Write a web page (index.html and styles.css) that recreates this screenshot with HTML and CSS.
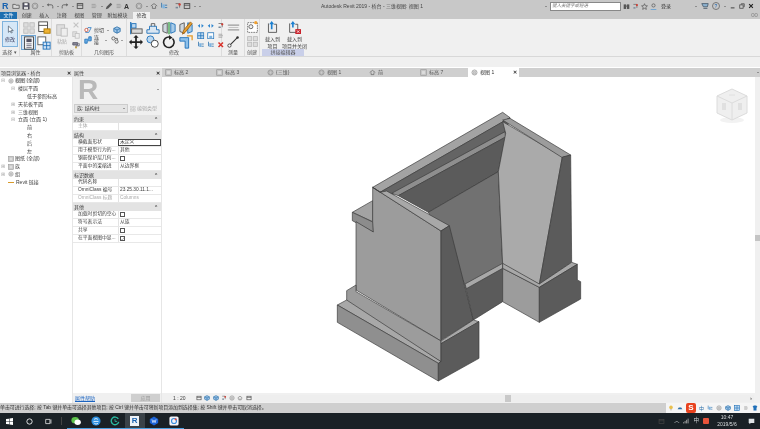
FILE: index.html
```html
<!DOCTYPE html>
<html lang="zh">
<head>
<meta charset="utf-8">
<title>Autodesk Revit 2019</title>
<link rel="stylesheet" href="styles.css">
</head>
<body>
<svg class="defs" width="0" height="0">
  <symbol id="faded" viewBox="0 0 16 16"><rect x="2" y="2" width="5" height="5" fill="#ddd" stroke="#bbb"/><rect x="9" y="2" width="5" height="5" fill="#ddd" stroke="#bbb"/><rect x="2" y="9" width="5" height="5" fill="#ddd" stroke="#bbb"/><rect x="9" y="9" width="5" height="5" fill="#ddd" stroke="#bbb"/></symbol>
  <symbol id="props" viewBox="0 0 16 16"><rect x="2" y="1" width="10" height="11" fill="#fff" stroke="#444"/><path d="M2 5h10" stroke="#444"/><rect x="8" y="9" width="7" height="5" fill="#eeb233" stroke="#a70"/></symbol>
  <symbol id="sheet" viewBox="0 0 16 16"><rect x="3" y="1" width="10" height="14" fill="#fff" stroke="#333"/><path d="M5 3h6v4H5z" fill="#556"/><path d="M5 9h6M5 11h6M5 13h6" stroke="#667"/></symbol>
  <symbol id="table" viewBox="0 0 16 16"><rect x="1" y="1" width="9" height="9" fill="#fff" stroke="#555"/><rect x="7" y="7" width="8" height="8" fill="#cfe2f5" stroke="#1b6fb8"/><path d="M11 7v8M7 11h8" stroke="#1b6fb8"/></symbol>
  <symbol id="paste" viewBox="0 0 16 16"><rect x="2" y="2" width="9" height="12" fill="#dedede" stroke="#bbb"/><rect x="7" y="6" width="7" height="9" fill="#eee" stroke="#bbb"/></symbol>
  <symbol id="ghost" viewBox="0 0 10 10"><path d="M2 2l6 6M8 2l-6 6" stroke="#c4c4c4" stroke-width="1.4"/></symbol>
  <symbol id="copy" viewBox="0 0 10 10"><rect x="1" y="1" width="5" height="6" fill="#e2e2e2" stroke="#c0c0c0"/><rect x="4" y="3" width="5" height="6" fill="#eee" stroke="#c0c0c0"/></symbol>
  <symbol id="brush" viewBox="0 0 10 10"><path d="M1 2h6v3H1z" fill="#889" stroke="#556"/><path d="M8 3h1v3H5v3" fill="none" stroke="#556"/><path d="M4 7h2v2H4z" fill="#c9a030"/></symbol>
  <symbol id="cut" viewBox="0 0 10 10"><path d="M2 8l3-6h4L6 8z" fill="#eee" stroke="#2b7cc4"/><circle cx="3" cy="5" r="2" fill="#fff" stroke="#d24a2c"/></symbol>
  <symbol id="join" viewBox="0 0 10 10"><path d="M1 4h5V1h3v5H4v3H1z" fill="#6eaee6" stroke="#1b6fb8"/></symbol>
  <symbol id="cube" viewBox="0 0 10 10"><path d="M5 1l4 2v4L5 9 1 7V3z" fill="#9cc4e8" stroke="#2a6ea8"/><path d="M1 3l4 2 4-2M5 5v4" stroke="#2a6ea8" fill="none"/></symbol>
  <symbol id="loop" viewBox="0 0 10 10"><circle cx="3" cy="3" r="2" fill="#eee" stroke="#555"/><circle cx="7" cy="7" r="2" fill="#eee" stroke="#555"/><path d="M5 3h3v2" stroke="#555" fill="none"/></symbol>
  <symbol id="undo" viewBox="0 0 10 10"><path d="M8.500 8V5.500a2 2 0 0 0-2-2H2" fill="none" stroke="#666" stroke-width="1.200"/><path d="M3.500 1.500L1 3.500l2.500 2z" fill="#666"/></symbol>
  <symbol id="redo" viewBox="0 0 10 10"><path d="M1.500 8V5.500a2 2 0 0 1 2-2H8" fill="none" stroke="#666" stroke-width="1.200"/><path d="M6.500 1.500L9 3.500l-2.500 2z" fill="#666"/></symbol>
  <symbol id="save" viewBox="0 0 10 10"><path d="M1 1h7l1 1v7H1z" fill="#556" stroke="#333" stroke-width=".6"/><rect x="3" y="1.500" width="4" height="2.500" fill="#fff"/><rect x="2.500" y="6" width="5" height="3" fill="#ddd"/></symbol>
  <symbol id="open" viewBox="0 0 10 10"><path d="M1 3h3l1 1h4v4H1z" fill="#d9d9d9" stroke="#555"/></symbol>
  <symbol id="pencil" viewBox="0 0 10 10"><path d="M1 9l1-3 5-5 2 2-5 5z" fill="#555"/></symbol>
  <symbol id="binoc" viewBox="0 0 10 10"><rect x="1" y="2" width="3.400" height="6.500" fill="#555"/><rect x="5.600" y="2" width="3.400" height="6.500" fill="#555"/><rect x="4" y="3.500" width="2" height="2" fill="#777"/></symbol>
  <symbol id="star" viewBox="0 0 10 10"><path d="M5 1l1.200 2.800 3 .3-2.300 2 .7 3L5 7.600 2.400 9.100l.7-3-2.300-2 3-.3z" fill="none" stroke="#555"/></symbol>
  <symbol id="user" viewBox="0 0 10 10"><circle cx="5" cy="3.500" r="2.300" fill="none" stroke="#555"/><path d="M1 9.500h8" stroke="#3a8fd8"/></symbol>
  <symbol id="cart" viewBox="0 0 10 10"><path d="M1 2h8L8 6H3z" fill="#8cb2d0" stroke="#456"/><path d="M3 8h5" stroke="#456"/></symbol>
  <symbol id="minw" viewBox="0 0 8 8"><path d="M1 6.500h5" stroke="#333" stroke-width="1.200"/></symbol>
  <symbol id="restw" viewBox="0 0 8 8"><path d="M3 2V1h4v4H6" fill="none" stroke="#444"/><rect x="1" y="2.500" width="4.500" height="4.500" fill="none" stroke="#444"/></symbol>
  <symbol id="closew" viewBox="0 0 8 8"><path d="M1.500 1.500l5 5M6.500 1.500l-5 5" stroke="#222" stroke-width="1.500"/></symbol>
  <symbol id="align" viewBox="0 0 16 16"><path d="M2 1v14" stroke="#1b6fb8" stroke-width="1.4"/><rect x="3" y="3" width="5" height="5" fill="#bcd8f0" stroke="#1b6fb8"/><rect x="3" y="9" width="12" height="5" fill="#d9d9d9" stroke="#555"/></symbol>
  <symbol id="offset" viewBox="0 0 16 16"><path d="M1 14h14v-4h-3V6H4v4H1z" fill="#d9e6f2" stroke="#1b6fb8"/><path d="M6 6V3h4v3" fill="none" stroke="#555"/></symbol>
  <symbol id="mirror" viewBox="0 0 16 16"><path d="M8 1v14" stroke="#3aa04a" stroke-width="1.5"/><path d="M1 4l5 -2v12l-5-2z" fill="#cfd8e0" stroke="#555"/><path d="M15 4l-5-2v12l5-2z" fill="#a7cbe8" stroke="#1b6fb8"/></symbol>
  <symbol id="mirror2" viewBox="0 0 16 16"><path d="M1 4l5-2v12l-5-2z" fill="#cfd8e0" stroke="#555"/><path d="M15 4l-5-2v12l5-2z" fill="#a7cbe8" stroke="#1b6fb8"/><path d="M13 1L5 11l-1 4 3-2 8-10z" fill="#e5a030" stroke="#a06010"/></symbol>
  <symbol id="move" viewBox="0 0 16 16"><path d="M8 0l3 3H9v4h4V5l3 3-3 3V9H9v4h2l-3 3-3-3h2V9H3v2L0 8l3-3v2h4V3H5z" fill="#222"/></symbol>
  <symbol id="copy2" viewBox="0 0 16 16"><circle cx="5" cy="5" r="4" fill="#bcd8f0" stroke="#1b6fb8"/><circle cx="10" cy="10" r="4" fill="#fff" stroke="#333"/></symbol>
  <symbol id="rotate" viewBox="0 0 16 16"><path d="M12 4a6 6 0 1 1-3-1.6" fill="none" stroke="#222" stroke-width="1.8"/><path d="M8 0l4 3-4 2.500z" fill="#222"/></symbol>
  <symbol id="trim" viewBox="0 0 16 16"><path d="M1 3h10v12H7V7H1z" fill="#8ec0ea" stroke="#1b6fb8"/><path d="M9 1h6v5" fill="none" stroke="#e39a2a" stroke-width="1.5"/></symbol>
  <symbol id="mini" viewBox="0 0 10 10"><path d="M1 5l3-2.500v5zM9 5L6 2.500v5z" fill="#2f86cf"/></symbol>
  <symbol id="grid4" viewBox="0 0 10 10"><rect x="1" y="1" width="8" height="8" fill="#bcd8f0" stroke="#1b6fb8"/><path d="M5 1v8M1 5h8" stroke="#1b6fb8"/></symbol>
  <symbol id="boxa" viewBox="0 0 10 10"><rect x="1" y="1" width="8" height="8" fill="#fff" stroke="#1b6fb8"/><rect x="3" y="5" width="4" height="3" fill="#7db3e0"/></symbol>
  <symbol id="pinq" viewBox="0 0 10 10"><path d="M2 2h5v5" fill="none" stroke="#666"/><circle cx="7" cy="3" r="1.500" fill="#d23a30"/><path d="M2 6h3v2H2z" fill="#789"/></symbol>
  <symbol id="grayp" viewBox="0 0 10 10"><path d="M2 3h5M2 5h6M2 7h5" stroke="#999"/></symbol>
  <symbol id="bars" viewBox="0 0 10 10"><path d="M2 1v6M6 4h3M6 7h3" stroke="#2a6ea8"/><rect x="3" y="3" width="3" height="5" fill="#7db3e0"/></symbol>
  <symbol id="del" viewBox="0 0 10 10"><path d="M2 2l6 6M8 2l-6 6" stroke="#d8322a" stroke-width="2"/></symbol>
  <symbol id="measure" viewBox="0 0 16 16"><path d="M1 5h14M1 11h14" stroke="#9a9a9a" stroke-width="1.4"/><path d="M2 8h12" stroke="#bbb"/></symbol>
  <symbol id="dim" viewBox="0 0 16 16"><path d="M3 13L13 3" stroke="#333" stroke-width="1.300"/><circle cx="3" cy="13" r="2" fill="#fff" stroke="#333"/><circle cx="13" cy="3" r="1.500" fill="#333"/></symbol>
  <symbol id="group" viewBox="0 0 16 16"><rect x="2" y="2" width="12" height="12" fill="#fff" stroke="#666" stroke-dasharray="2 1"/><circle cx="6" cy="7" r="2.500" fill="#eee" stroke="#555"/><circle cx="12" cy="2" r="2" fill="#f0a030"/></symbol>
  <symbol id="load" viewBox="0 0 16 16"><path d="M3 3v11h10V4h-3" fill="#eee" stroke="#444"/><path d="M6 10V4H4l3-4 3 4H8v6z" fill="#1b7fd0"/></symbol>
  <symbol id="loadx" viewBox="0 0 16 16"><path d="M2 3v11h10V4H9" fill="#eee" stroke="#444"/><path d="M5 8V4H3l3-4 3 4H7v4z" fill="#1b7fd0"/><rect x="9" y="10" width="7" height="6" fill="#c9202a"/><path d="M11 11.500l3 3M14 11.500l-3 3" stroke="#fff"/></symbol>
  <symbol id="tabp" viewBox="0 0 10 10"><rect x="1" y="1" width="8" height="8" fill="#c9c9c9" stroke="#999"/><path d="M3 3h4v4H3z" fill="#ddd"/></symbol>
  <symbol id="tab3" viewBox="0 0 10 10"><circle cx="5" cy="5" r="3.600" fill="none" stroke="#888"/><path d="M3 4l2-1 2 1v2.500l-2 1-2-1z" fill="#ccc" stroke="#888" stroke-width=".5"/></symbol>
  <symbol id="house" viewBox="0 0 10 10"><path d="M1 5l4-3 4 3M3 5v3h4V5" fill="none" stroke="#666"/></symbol>
  <symbol id="tx" viewBox="0 0 10 10"><rect x="1.500" y="2" width="7" height="6" fill="none" stroke="#444"/><path d="M1.500 4h7" stroke="#444"/></symbol>
  <symbol id="sys" viewBox="0 0 10 10"><path d="M1 7h8M3 4h4l2 3H1z" fill="#2a6ea8"/></symbol>
  <symbol id="bulb" viewBox="0 0 10 10"><circle cx="5" cy="4" r="3" fill="#e8c050"/><path d="M4 8h2" stroke="#999" stroke-width="1.400"/></symbol>
  <symbol id="shirt" viewBox="0 0 10 10"><path d="M1 3l2-2h4l2 2-1.500 1.500V9h-5V4.500z" fill="#1f6fb8"/></symbol>
  <symbol id="infin" viewBox="0 0 10 6"><rect x=".5" y=".5" width="4" height="5" rx="2" fill="none" stroke="#888"/><rect x="5.500" y=".5" width="4" height="5" rx="2" fill="none" stroke="#888"/></symbol>
</svg>

<div class="app">
  <header class="titlebar">
    <div class="rlogo">R</div>
    <div class="qat">
      <svg class="q"><use href="#open"/></svg><svg class="q"><use href="#save"/></svg><svg class="q"><use href="#tab3"/></svg><i class="dd"></i><svg class="q"><use href="#undo"/></svg><i class="dd"></i><svg class="q"><use href="#redo"/></svg><i class="dd"></i><svg class="q"><use href="#tx"/></svg><b class="sp"></b><svg class="q"><use href="#grayp"/></svg><i class="dd"></i><svg class="q"><use href="#pencil"/></svg><svg class="q"><use href="#grayp"/></svg><span class="qa">A</span><b class="sp"></b><svg class="q"><use href="#tab3"/></svg><i class="dd"></i><svg class="q"><use href="#house"/></svg><svg class="q"><use href="#bars"/></svg><b class="sp"></b><svg class="q"><use href="#pinq"/></svg><svg class="q"><use href="#tx"/></svg><i class="dd"></i><i class="dd"></i>
    </div>
    <div class="doc-title">Autodesk Revit 2019 - 桥台 - 三维视图: 视图 1</div>
    <div class="search-wrap">
      <i class="dd"></i>
      <div class="search">键入关键字或短语</div>
      <svg class="qs"><use href="#binoc"/></svg><svg class="qs"><use href="#pinq"/></svg><svg class="qs"><use href="#star"/></svg><svg class="qs"><use href="#user"/></svg>
      <span class="login">登录</span>
    </div>
    <div class="winbtns">
      <i class="dd"></i><svg class="q"><use href="#cart"/></svg>
      <span class="help">?</span><i class="dd"></i>
      <svg class="wb"><use href="#minw"/></svg><svg class="wb"><use href="#restw"/></svg><svg class="wb"><use href="#closew"/></svg>
    </div>
  </header>

  <nav class="ribbon-tabs">
    <span class="rt file">文件</span><span class="rt">创建</span><span class="rt">插入</span><span class="rt">注释</span><span class="rt">视图</span><span class="rt">管理</span><span class="rt rt-w">附加模块</span><span class="rt active">修改</span>
    <svg class="rt-end"><use href="#infin"/></svg>
  </nav>

  <section class="ribbon">
    <div class="panel p-select">
      <div class="pbody"><div class="modify-btn"><svg class="cursor" viewBox="0 0 10 12"><path d="M2 1v9l2.500-2 1.500 3 1.500-.7L6 7.500h3z" fill="#fff" stroke="#456"/></svg><span>修改</span></div></div>
      <div class="plabel">选择 ▾</div>
    </div>
    <div class="panel p-prop">
      <div class="pbody grid-2">
        <svg class="i16"><use href="#faded"/></svg><svg class="i16"><use href="#props"/></svg>
        <span class="sel"><svg class="i16"><use href="#sheet"/></svg></span><svg class="i16"><use href="#table"/></svg>
      </div>
      <div class="plabel">属性</div>
    </div>
    <div class="panel p-clip">
      <div class="pbody clip">
        <div class="paste"><svg class="i16"><use href="#paste"/></svg><span>粘贴</span></div>
        <div class="col3"><svg class="i10"><use href="#ghost"/></svg><svg class="i10"><use href="#copy"/></svg><svg class="i10"><use href="#brush"/></svg></div>
      </div>
      <div class="plabel">剪贴板</div>
    </div>
    <div class="panel p-geo">
      <div class="pbody geo">
        <div class="georow"><svg class="i10"><use href="#cut"/></svg><span>剪切</span><i class="dd"></i><svg class="i10"><use href="#cube"/></svg></div>
        <div class="georow"><svg class="i10"><use href="#join"/></svg><span>连接</span><i class="dd"></i><svg class="i10"><use href="#loop"/></svg><i class="dd"></i></div>
      </div>
      <div class="plabel">几何图形</div>
    </div>
    <div class="panel p-mod">
      <div class="pbody mod">
        <div class="grid-4">
          <svg class="i16"><use href="#align"/></svg><svg class="i16"><use href="#offset"/></svg><svg class="i16"><use href="#mirror"/></svg><svg class="i16"><use href="#mirror2"/></svg>
          <svg class="i16"><use href="#move"/></svg><svg class="i16"><use href="#copy2"/></svg><svg class="i16"><use href="#rotate"/></svg><svg class="i16"><use href="#trim"/></svg>
        </div>
        <div class="grid-3">
          <svg class="i8"><use href="#mini"/></svg><svg class="i8"><use href="#mini"/></svg><svg class="i8"><use href="#pinq"/></svg>
          <svg class="i8"><use href="#grid4"/></svg><svg class="i8"><use href="#boxa"/></svg><svg class="i8"><use href="#grayp"/></svg>
          <svg class="i8"><use href="#bars"/></svg><svg class="i8"><use href="#bars"/></svg><svg class="i8"><use href="#del"/></svg>
        </div>
      </div>
      <div class="plabel">修改</div>
    </div>
    <div class="panel p-meas">
      <div class="pbody meas"><svg class="i14"><use href="#measure"/></svg><svg class="i14"><use href="#dim"/></svg></div>
      <div class="plabel">测量</div>
    </div>
    <div class="panel p-create">
      <div class="pbody meas"><svg class="i14"><use href="#group"/></svg><svg class="i14"><use href="#faded"/></svg></div>
      <div class="plabel">创建</div>
    </div>
    <div class="panel p-edit">
      <div class="pbody load">
        <div class="loadbtn"><svg class="i14"><use href="#load"/></svg><span>载入到<br>项目</span></div>
        <div class="loadbtn"><svg class="i14"><use href="#loadx"/></svg><span>载入到<br>项目并关闭</span></div>
      </div>
      <div class="plabel plabel-edit">拼接编辑器</div>
    </div>
  </section>
  <div class="band"></div>

  <main class="workspace">
    <aside class="browser">
      <div class="phead"><span>项目浏览器 - 桥台</span><span class="close">✕</span></div>
      <ul class="tree">
        <li class="l0"><i class="tw">⊟</i><svg class="i6"><use href="#tab3"/></svg><span class="cur">视图 (全部)</span></li>
        <li class="l1"><i class="tw">⊟</i>楼层平面</li>
        <li class="l2">低于参照标高</li>
        <li class="l1"><i class="tw">⊞</i>天花板平面</li>
        <li class="l1"><i class="tw">⊞</i>三维视图</li>
        <li class="l1"><i class="tw">⊟</i>立面 (立面 1)</li>
        <li class="l3">前</li>
        <li class="l3">右</li>
        <li class="l3">后</li>
        <li class="l3">左</li>
        <li class="l0"><i class="tw"></i><svg class="i6"><use href="#tabp"/></svg>图纸 (全部)</li>
        <li class="l0"><i class="tw">⊞</i><svg class="i6"><use href="#tabp"/></svg>族</li>
        <li class="l0"><i class="tw">⊞</i><svg class="i6"><use href="#tab3"/></svg>组</li>
        <li class="l0"><i class="tw"></i><i class="link"></i>Revit 链接</li>
      </ul>
    </aside>

    <aside class="props">
      <div class="phead"><span>属性</span><span class="close">✕</span></div>
      <div class="preview"><span class="bigr">R</span><i class="dd"></i></div>
      <div class="typerow"><div class="typesel"><span>族: 结构柱</span><i class="dd"></i></div><div class="edittype"><svg class="i6"><use href="#faded"/></svg>编辑类型</div></div>
      <div class="ptable">
        <div class="sec"><span>约束</span><b>⌃</b></div>
        <div class="row dim"><span>主体</span><span></span></div>
        <div class="sec"><span>结构</span><b>⌃</b></div>
        <div class="row"><span>横截面形状</span><span class="focus">未定义</span></div>
        <div class="row"><span>用于模型行为的...</span><span>其他</span></div>
        <div class="row"><span>钢筋保护层几何...</span><span><i class="chk"></i></span></div>
        <div class="row"><span>平面中的梁缩进</span><span>从边界框</span></div>
        <div class="sec"><span>标识数据</span><b>⌃</b></div>
        <div class="row"><span>代码名称</span><span></span></div>
        <div class="row"><span>OmniClass 编号</span><span>23.25.30.11.1...</span></div>
        <div class="row dim"><span>OmniClass 标题</span><span>Columns</span></div>
        <div class="sec"><span>其他</span><b>⌃</b></div>
        <div class="row"><span>加载时剪切的空心</span><span><i class="chk"></i></span></div>
        <div class="row"><span>符号表示法</span><span>从族</span></div>
        <div class="row"><span>共享</span><span><i class="chk"></i></span></div>
        <div class="row"><span>在平面视图中显...</span><span><i class="chk on">✓</i></span></div>
      </div>
      <div class="pfoot"><a class="helplink">属性帮助</a><span class="apply">应用</span></div>
    </aside>

    <section class="viewarea">
      <div class="vtabs">
        <div class="vt"><svg class="i7"><use href="#tabp"/></svg>标高 2</div>
        <div class="vt"><svg class="i7"><use href="#tabp"/></svg>标高 3</div>
        <div class="vt"><svg class="i7"><use href="#tab3"/></svg>{三维}</div>
        <div class="vt"><svg class="i7"><use href="#tab3"/></svg>视图 1</div>
        <div class="vt"><svg class="i7"><use href="#house"/></svg>前</div>
        <div class="vt"><svg class="i7"><use href="#tabp"/></svg>标高 7</div>
        <div class="vt vt-active"><svg class="i7"><use href="#tab3"/></svg>视图 1<span class="vx">✕</span></div>
        <div class="vfill"><i class="dd"></i></div>
      </div>
      <div class="canvas-wrap">
        <div class="canvas">
          <svg class="model" viewBox="0 0 780 840" stroke="#3a3a3a" stroke-width="2" stroke-linejoin="round">
            <polygon points="128,247 518,22 540,38 150,262" fill="#a3a3a3"/>
            <polygon points="150,262 540,38 527,85 190,268" fill="#646464"/>
            <polygon points="185,265 525,80 527,96 205,272" fill="#8e8e8e"/>
            <polygon points="205,272 527,96 505,200 295,322" fill="#5b5b5b"/>
            <polygon points="295,322 505,200 518,478 405,540" fill="#717171"/>
            <polygon points="518,50 527,85 505,200 518,478 628,538 697,155" fill="#aaaaaa"/>
            <polygon points="518,45 540,40 722,150 697,158" fill="#9c9c9c"/>
            <polygon points="697,156 722,150 725,472 628,538" fill="#5b5b5b"/>
            <polygon points="67,322 128,287 128,350" fill="#a3a3a3"/>
            <polygon points="67,322 130,352 130,381 67,347" fill="#8c8c8c"/>
            <polygon points="128,247 333,378 333,708 78,555 78,350 130,381 128,350" fill="#9c9c9c"/>
            <polygon points="128,247 150,262 170,258 358,362 333,378" fill="#a8a8a8"/>
            <polygon points="333,378 358,362 430,645 333,706" fill="#5b5b5b"/>
            <polygon points="405,540 518,478 518,590 430,645" fill="#5b5b5b"/>
            <polygon points="405,537 518,475 518,490 409,551" fill="#a8a8a8"/>
            <polygon points="518,490 628,547 628,652 518,590" fill="#9c9c9c"/>
            <polygon points="518,475 628,537 725,472 742,478 628,547 518,490" fill="#a8a8a8"/>
            <polygon points="628,547 742,478 742,525 752,530 752,582 628,652" fill="#5b5b5b"/>
            <polygon points="50,557 78,540 78,560 333,708 333,770 50,603" fill="#9c9c9c"/>
            <polygon points="333,708 430,645 447,650 333,716" fill="#a8a8a8"/>
            <polygon points="22,600 50,585 333,770 325,775" fill="#a8a8a8"/>
            <polygon points="22,600 325,775 325,828 22,652" fill="#8f8f8f"/>
            <polygon points="333,716 447,650 447,760 325,828 325,775 333,770" fill="#5b5b5b"/>
          </svg>
          <svg class="viewcube" viewBox="0 0 34 36">
            <ellipse cx="17" cy="32" rx="12" ry="3" fill="#f2f2f2"/>
            <path d="M17 1L32 8v17L17 32 2 25V8z" fill="#efefef" stroke="#dcdcdc"/>
            <path d="M2 8l15 7 15-7M17 15v17" fill="none" stroke="#dcdcdc"/>
            <path d="M7 15h4v7H7zM23 15h4v7h-4z" fill="#e0e0e0"/>
            <path d="M14 7h6" stroke="#e0e0e0"/>
          </svg>
          <div class="vscroll"><i class="thumb"></i></div>
        </div>
        <div class="viewctl">
          <span class="scale">1 : 20</span>
          <div class="vctl-ic"><svg class="i6"><use href="#tx"/></svg><svg class="i6"><use href="#cube"/></svg><svg class="i6"><use href="#cube"/></svg><svg class="i6"><use href="#pinq"/></svg><svg class="i6"><use href="#tab3"/></svg><svg class="i6"><use href="#house"/></svg><svg class="i6"><use href="#tx"/></svg><svg class="i6"><use href="#tx"/></svg></div>
          <div class="hscroll"><i class="hthumb"></i><span class="harrow">›</span></div>
        </div>
      </div>
    </section>
  </main>

  <footer class="status">
    <span class="stext">单击可进行选择; 按 Tab 键并单击可选择其他项目; 按 Ctrl 键并单击可将新项目添加到选择集; 按 Shift 键并单击可取消选择。</span>
    <div class="stray">
      <svg class="i6"><use href="#bulb"/></svg><svg class="i6"><use href="#sys"/></svg><span class="sogou">S</span><span class="zh">中</span><svg class="i6"><use href="#bars"/></svg><svg class="i6"><use href="#tab3"/></svg><svg class="i6"><use href="#cube"/></svg><svg class="i6"><use href="#grid4"/></svg><svg class="i6"><use href="#grayp"/></svg><svg class="i6"><use href="#shirt"/></svg><svg class="i6"><use href="#grid4"/></svg>
    </div>
  </footer>

  <div class="taskbar">
    <div class="tb-left">
      <span class="tbi"><svg class="i7" viewBox="0 0 10 10"><path d="M0 1.500l4.300-.6v3.800H0zM5 .8L10 0v4.700H5zM0 5.300h4.300v3.800L0 8.500zM5 5.300h5V10l-5-.8z" fill="#fff"/></svg></span>
      <span class="tbi"><svg class="i7" viewBox="0 0 10 10"><circle cx="5" cy="5" r="3.800" fill="none" stroke="#fff" stroke-width="1.200"/></svg></span>
      <span class="tbi"><svg class="i7" viewBox="0 0 10 10"><path d="M1 2h6v6H1zM8.500 2v6" fill="none" stroke="#fff"/></svg></span>
      <span class="tbsep"></span>
      <span class="tbi run"><svg class="i10t" viewBox="0 0 12 12"><ellipse cx="5" cy="5" rx="4.500" ry="3.800" fill="#5cc34a"/><ellipse cx="8" cy="7.500" rx="3.800" ry="3.200" fill="#fff"/></svg></span>
      <span class="tbi run"><svg class="i10t" viewBox="0 0 12 12"><circle cx="6" cy="6" r="5.500" fill="#2c8fe0"/><path d="M3 6.500h6M3.500 4.500a3 3 0 0 1 5 0M3.500 8a3 3 0 0 0 5 .5" fill="none" stroke="#fff"/></svg></span>
      <span class="tbi run"><svg class="i10t" viewBox="0 0 12 12"><path d="M10 3.500A4.600 4.600 0 1 0 10.500 7" fill="none" stroke="#29b9a0" stroke-width="1.600"/><path d="M6 3.500v3h2.500" fill="none" stroke="#29b9a0"/></svg></span>
      <span class="tbi run act"><span class="revit">R</span></span>
      <span class="tbi run"><svg class="i10t" viewBox="0 0 12 12"><path d="M6 .500l5 3v5l-5 3-5-3v-5z" fill="#1c64d8"/><path d="M3.500 4l1.200 4L6 5l1.300 3 1.200-4" fill="none" stroke="#fff" stroke-width=".8"/></svg></span>
      <span class="tbi run"><svg class="i10t" viewBox="0 0 12 12"><rect x=".5" y=".5" width="11" height="11" rx="2" fill="#f4f4f8"/><circle cx="6" cy="6" r="3" fill="none" stroke="#3a90e0" stroke-width="1.400"/><circle cx="8" cy="4" r="1.300" fill="#e04a4a"/></svg></span>
    </div>
    <div class="tb-right">
      <svg class="i7 tr-first"><use href="#tx"/></svg>
      <span class="tray">︿</span>
      <svg class="i6w" viewBox="0 0 10 10"><path d="M1 9V7M3.500 9V5M6 9V3M8.500 9V1" stroke="#bbb" stroke-width="1.300"/></svg>
      <span class="tray">中</span>
      <span class="redi"></span>
      <div class="clock"><span>10:47</span><span>2019/5/6</span></div>
      <svg class="i7" viewBox="0 0 10 10"><path d="M1 1h8v6H4L2 9V7H1z" fill="#dfe3e6"/></svg>
    </div>
  </div>
</div>
</body>
</html>
```

FILE: styles.css
```css
* { box-sizing: border-box; }
html, body { margin: 0; padding: 0; background: #fff; }
body { width: 760px; height: 429px; overflow: hidden; font-family: "Liberation Sans", "Noto Sans CJK SC", sans-serif; font-size: 5px; color: #3c3c3c; line-height: 1; }
.defs { display: block; height: 0; }
.app { width: 760px; height: 429px; display: flex; flex-direction: column; overflow: hidden; filter: blur(0.25px); }
svg { display: block; flex: none; }
i { font-style: normal; }

.dd { display: inline-block; width: 0; height: 0; margin: 0 1px; border: 1.500px solid transparent; border-top-color: #555; border-bottom-width: 0; flex: none; }
.sp { width: 3px; flex: none; }

.titlebar { height: 12px; background: #c8c8c8; display: flex; align-items: center; flex: none; }
.rlogo { width: 8px; margin-left: 2px; font: bold 9px/12px "Liberation Sans", sans-serif; color: #1a63b0; flex: none; }
.qat { width: 198px; display: flex; align-items: center; gap: 1.500px; margin-left: 2px; flex: none; }
.q { width: 8px; height: 8px; }
.qs { width: 7px; height: 7px; }
.qa { font: bold 7px "Liberation Sans", sans-serif; color: #333; }
.doc-title { width: 130px; margin-left: 96px; padding-left: 15px; white-space: nowrap; color: #444; flex: none; }
.search-wrap { display: flex; align-items: center; gap: 2px; margin-left: 108px; flex: none; width: 150px; }
.search { width: 71px; height: 9px; background: #fff; border: 1px solid #888; font-size: 4.500px; color: #777; padding: 1px; font-style: italic; white-space: nowrap; }
.login { color: #333; margin-left: 2px; }
.winbtns { display: flex; align-items: center; gap: 3px; flex: none; }
.help { width: 8px; height: 8px; border: 1px solid #777; border-radius: 50%; font-size: 5px; text-align: center; color: #1a63b0; line-height: 6px; }
.wb { width: 6px; height: 6px; }

.ribbon-tabs { height: 7px; background: #c8c8c8; display: flex; align-items: stretch; flex: none; }
.rt { width: 17.500px; text-align: center; color: #444; font-size: 5px; line-height: 7px; white-space: nowrap; flex: none; }
.rt-w { width: 24px; margin-right: 3.500px; }
.file { width: 17px; background: #1e6fb0; color: #eef5fb; margin-right: 1px; }
.active { background: #f0f0f0; color: #333; width: 17px; }
.rt-end { width: 7px; height: 4px; margin: 1px 2px 0 auto; }

.ribbon { height: 38px; background: #f0f0f0; display: flex; border-bottom: 1px solid #d8d8d8; flex: none; }
.panel { display: flex; flex-direction: column; border-right: 1px solid #dcdcdc; flex: none; }
.pbody { flex: 1; min-height: 0; }
.plabel { height: 7px; text-align: center; color: #555; font-size: 5px; white-space: nowrap; line-height: 7px; }
.p-select { width: 20px; }
.p-prop { width: 32px; }
.p-clip { width: 30px; }
.p-geo { width: 45px; }
.p-mod { width: 95px; }
.p-meas { width: 23px; }
.p-create { width: 15px; }
.p-edit { width: 47px; border-right: 0; padding-left: 2px; }
.plabel-edit { background: #c9cfe9; margin-right: 3px; }

.modify-btn { margin: 2px 1px 0 2px; height: 26px; background: #d5e7f7; border: 1px solid #7fb3dd; display: flex; flex-direction: column; align-items: center; justify-content: space-between; padding: 3px 0 4px; color: #335; }
.cursor { width: 7px; height: 9px; }
.grid-2 { display: grid; grid-template-columns: 15px 15px; grid-auto-rows: 15px; justify-items: center; align-items: center; padding: 1px 0 0 1px; }
.i16 { width: 14px; height: 14px; }
.i14 { width: 13px; height: 13px; }
.i10 { width: 8px; height: 8px; }
.i8 { width: 7.500px; height: 7.500px; }
.i7 { width: 7px; height: 7px; }
.i6 { width: 6px; height: 6px; }
.sel { background: #cfe2f4; border: 1px solid #6ea5d4; display: flex; width: 15px; height: 15px; align-items: center; justify-content: center; }

.clip { display: flex; padding: 1px 0 0 3px; gap: 3px; }
.paste { width: 14px; display: flex; flex-direction: column; align-items: center; gap: 2px; padding-top: 3px; color: #aaa; }
.col3 { display: flex; flex-direction: column; gap: 2px; padding-top: 1px; }
.geo { display: flex; flex-direction: column; gap: 2px; padding: 7px 0 0 2px; }
.georow { display: flex; align-items: center; gap: 1px; height: 8px; }
.georow .dd { margin-right: 3px; }
.georow span { width: 11px; margin-left: 1px; }

.mod { display: flex; gap: 2px; padding: 2px 0 0 1px; }
.grid-4 { display: grid; grid-template-columns: repeat(4, 16.500px); grid-auto-rows: 14px; justify-items: center; align-items: center; }
.grid-3 { display: grid; grid-template-columns: repeat(3, 10px); grid-auto-rows: 9.500px; justify-items: center; align-items: center; }

.meas { display: flex; flex-direction: column; align-items: center; gap: 1px; padding-top: 2px; }
.load { display: flex; padding-top: 2px; gap: 1px; }
.loadbtn { width: 21px; display: flex; flex-direction: column; align-items: center; text-align: center; gap: 2px; font-size: 5px; line-height: 7px; color: #444; white-space: nowrap; }

.band { height: 11px; background: #f0f0f0; border-bottom: 1px solid #fff; flex: none; }

.workspace { height: 335px; display: flex; background: #e6e6e6; gap: 1px; flex: none; }
.browser { width: 72px; background: #fff; display: flex; flex-direction: column; flex: none; }
.props { width: 88px; background: #fff; display: flex; flex-direction: column; flex: none; }
.phead { height: 9px; background: #e4e4e4; display: flex; justify-content: space-between; align-items: center; padding: 1px 1px 0; font-size: 5px; color: #444; flex: none; white-space: nowrap; }
.close { font-size: 5px; color: #222; font-weight: bold; }

.tree { list-style: none; margin: 0; padding: 0; }
.tree li { height: 7.800px; display: flex; align-items: center; gap: 1px; white-space: nowrap; }
.l0 { padding-left: 1px; }
.l1 { padding-left: 11px; }
.l2 { padding-left: 27px; }
.l3 { padding-left: 27px; }
.tw { width: 6px; font-size: 5px; color: #aaa; flex: none; }
.cur { background: #f0f0f0; }
.link { width: 6px; height: 1.500px; background: #d89a2a; margin-right: 1px; }

.preview { height: 25px; background: #f0f0f0; display: flex; justify-content: space-between; align-items: center; padding: 0 1px 0 5px; flex: none; }
.bigr { font: bold 28px/25px "Liberation Sans", sans-serif; color: #b9b9b9; }
.typerow { height: 13px; background: #f0f0f0; display: flex; align-items: center; gap: 2px; padding: 0 1px; flex: none; }
.typesel { width: 54px; height: 9px; background: #e4e4e4; border: 1px solid #ccc; display: flex; justify-content: space-between; align-items: center; padding: 0 1px 0 2px; }
.edittype { display: flex; align-items: center; gap: 1px; color: #aaa; white-space: nowrap; }

.ptable { flex: 1; min-height: 0; }
.sec { height: 8px; background: #e3e3e3; display: flex; justify-content: space-between; align-items: center; padding: 0 3px 0 1px; }
.sec b { font-size: 5px; color: #333; }
.row { height: 8px; display: grid; grid-template-columns: 45px 1fr; border-bottom: 1px solid #e8e8e8; }
.row > span { padding-left: 5px; display: flex; align-items: center; white-space: nowrap; overflow: hidden; font-size: 4.800px; }
.row > span + span { padding-left: 1px; border-left: 1px solid #e3e3e3; }
.dim { color: #aaa; }
.row .focus { border: 1px solid #444; }
.chk { width: 5px; height: 5px; border: 1px solid #555; background: #fff; display: block; font-size: 5px; line-height: 4px; color: #555; }

.pfoot { height: 10px; background: #f0f0f0; display: flex; justify-content: space-between; align-items: center; padding: 0 1px 0 2px; flex: none; }
.helplink { color: #1a63c0; text-decoration: underline; }
.apply { width: 29px; height: 8px; background: #cfcfcf; text-align: center; color: #999; line-height: 8px; }

.viewarea { flex: 1; min-width: 0; display: flex; flex-direction: column; background: #fff; }
.vtabs { height: 9px; display: flex; background: #cfcfcf; flex: none; }
.vt { width: 51px; display: flex; align-items: center; gap: 2px; padding-left: 3px; color: #555; white-space: nowrap; flex: none; }
.vt-active { background: #fff; color: #333; }
.vx { margin-left: auto; margin-right: 2px; color: #333; font-weight: bold; }
.vfill { flex: 1; display: flex; justify-content: flex-end; align-items: center; }
.canvas-wrap { flex: 1; min-height: 0; display: flex; flex-direction: column; }
.canvas { flex: 1; min-height: 0; position: relative; background: #fff; }
.model { position: absolute; left: 168px; top: 28px; width: 260px; height: 280px; }
.viewcube { position: absolute; right: 11px; top: 11px; width: 34px; height: 36px; }
.vscroll { position: absolute; right: 0; top: 0; bottom: 0; width: 5px; background: #f0f0f0; }
.thumb { position: absolute; left: 0; top: 158px; width: 5px; height: 6px; background: #c4c4c4; display: block; }
.viewctl { height: 10px; background: #f0f0f0; display: flex; align-items: center; flex: none; }
.scale { width: 32px; padding-left: 11px; white-space: nowrap; flex: none; }
.vctl-ic { display: flex; gap: 2.300px; align-items: center; width: 60px; flex: none; padding-left: 2px; }
.hscroll { flex: 1; height: 7px; background: #eee; position: relative; margin-right: 6px; }
.hthumb { position: absolute; left: 251px; top: 0; width: 6px; height: 7px; background: #c9c9c9; }
.harrow { position: absolute; right: 2px; top: 0; font-size: 6px; color: #333; }

.status { height: 10px; background: #cfcfcf; display: flex; align-items: center; justify-content: space-between; flex: none; }
.stext { white-space: nowrap; color: #333; font-size: 4.900px; }
.stray { display: flex; align-items: center; gap: 3px; padding: 0 1px 0 2px; background: #f5f5f5; height: 10px; width: 94px; }
.sogou { width: 10px; height: 10px; background: #e8421e; color: #fff; font: bold 8px/10px "Liberation Sans", sans-serif; text-align: center; border-radius: 2px; flex: none; }
.zh { color: #2a6ea8; }

.taskbar { height: 16px; background: #1a2126; display: flex; justify-content: space-between; flex: none; }
.tb-left { display: flex; align-items: stretch; }
.tbi { width: 19.500px; display: flex; align-items: center; justify-content: center; flex: none; }
.tbsep { width: 1px; margin: 4px 5px 4px 2px; background: #444; }
.run { border-bottom: 1px solid #4aa0e0; }
.act { background: #3a4248; }
.i10t { width: 10px; height: 10px; }
.revit { width: 9px; height: 10px; background: #eef3f8; color: #1a63b0; font: bold 8px/10px "Liberation Sans", sans-serif; text-align: center; }
.tb-right { display: flex; align-items: center; gap: 4px; padding-right: 5px; }
.tr-first { margin-right: 5px; }
.tray { color: #cfd3d6; font-size: 5.500px; }
.i6w { width: 6px; height: 6px; }
.redi { width: 6px; height: 6px; background: #e8533a; border-radius: 1px; }
.clock { width: 26px; display: flex; flex-direction: column; gap: 2.500px; align-items: center; color: #d9dcde; margin: 0 4px 0 1px; }
```
